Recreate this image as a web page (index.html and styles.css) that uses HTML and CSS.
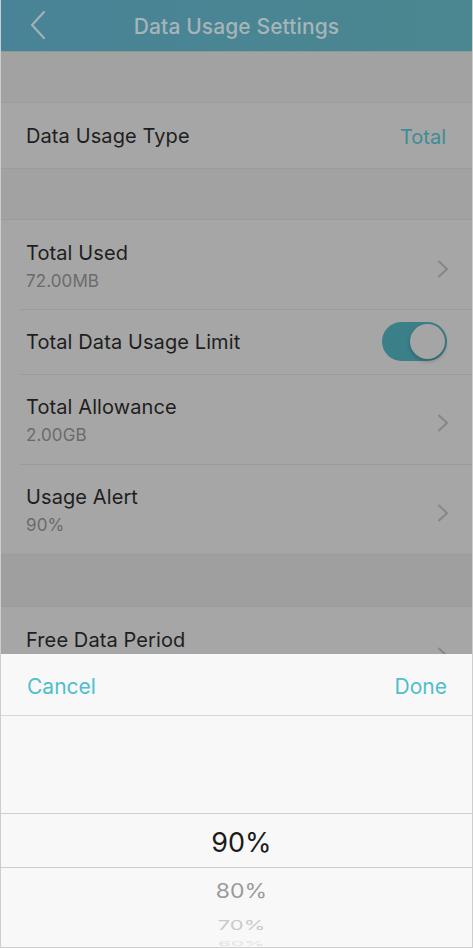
FILE: index.html
```html
<!DOCTYPE html>
<html lang="en">
<head>
<meta charset="utf-8">
<title>Data Usage Settings</title>
<link rel="stylesheet" href="styles.css">
</head>
<body>
<div class="frame">
  <header class="navbar">
    <svg class="back" width="18" height="30" viewBox="0 0 18 30"><path d="M15 2 L3 15 L15 28" fill="none" stroke="#a3b1b5" stroke-width="2.2" stroke-linecap="round" stroke-linejoin="round"/></svg>
    <h1 class="title">Data Usage Settings</h1>
  </header>

  <div class="gap"></div>
  <section class="group">
    <div class="row single">
      <span class="label">Data Usage Type</span>
      <span class="value">Total</span>
    </div>
  </section>

  <div class="gap"></div>
  <section class="group">
    <div class="row double">
      <div class="texts"><span class="label">Total Used</span><span class="sub">72.00MB</span></div>
      <svg class="chev" width="12" height="18" viewBox="0 0 12 18"><path d="M2 1.5 L10 9 L2 16.5" fill="none" stroke="#878787" stroke-width="2" stroke-linecap="round" stroke-linejoin="round"/></svg>
    </div>
    <div class="row single">
      <span class="label">Total Data Usage Limit</span>
      <span class="toggle"><span class="knob"></span></span>
    </div>
    <div class="row double">
      <div class="texts"><span class="label">Total Allowance</span><span class="sub">2.00GB</span></div>
      <svg class="chev" width="12" height="18" viewBox="0 0 12 18"><path d="M2 1.5 L10 9 L2 16.5" fill="none" stroke="#878787" stroke-width="2" stroke-linecap="round" stroke-linejoin="round"/></svg>
    </div>
    <div class="row double">
      <div class="texts"><span class="label">Usage Alert</span><span class="sub">90%</span></div>
      <svg class="chev" width="12" height="18" viewBox="0 0 12 18"><path d="M2 1.5 L10 9 L2 16.5" fill="none" stroke="#878787" stroke-width="2" stroke-linecap="round" stroke-linejoin="round"/></svg>
    </div>
  </section>

  <div class="gap dark"></div>
  <section class="group">
    <div class="row double">
      <div class="texts"><span class="label">Free Data Period</span><span class="sub-space"></span></div>
      <svg class="chev" width="12" height="18" viewBox="0 0 12 18"><path d="M2 1.5 L10 9 L2 16.5" fill="none" stroke="#878787" stroke-width="2" stroke-linecap="round" stroke-linejoin="round"/></svg>
    </div>
  </section>

  <div class="sheet">
    <div class="toolbar">
      <span class="action">Cancel</span>
      <span class="action">Done</span>
    </div>
    <div class="picker">
      <div class="spacer"></div>
      <div class="band"><span class="opt selected">90%</span></div>
      <div class="opt o1">80%</div>
      <div class="opt o2">70%</div>
      <div class="opt o3">60%</div>
    </div>
  </div>
</div>
</body>
</html>
```

FILE: styles.css
```css
* { box-sizing: border-box; }
html, body { margin: 0; padding: 0; }
body {
  font-family: Inter, "Open Sans", "Liberation Sans", sans-serif;
  background: #a3a3a3;
}
.frame {
  position: relative;
  width: 473px;
  height: 948px;
  overflow: hidden;
  border: 1px solid #cdcdcd;
  border-top: none;
  background: #a2a2a2;
}
.navbar {
  height: 52px;
  background: linear-gradient(90deg, #488397 0%, #4a878f 100%);
  display: flex;
  align-items: center;
  justify-content: center;
  position: relative;
  border-bottom: 1px solid #8a9a9e;
}
.back {
  position: absolute;
  left: 28px;
  top: 10px;
}
.title {
  margin: 1px 0 0;
  font-size: 21px;
  font-weight: 500;
  color: #a7b4b8;
  letter-spacing: 0.1px;
}
.gap {
  height: 50px;
  background: #a2a2a2;
}
.gap.dark { background: #9f9f9f; height: 51px; }
.group {
  background: #a6a6a6;
  border-top: 1px solid #9b9b9b;
  border-bottom: 1px solid #9b9b9b;
}
.row {
  display: flex;
  align-items: center;
  justify-content: space-between;
  padding: 2px 26px 0 25px;
  position: relative;
}
.row + .row::before {
  content: "";
  position: absolute;
  top: 0;
  left: 19px;
  right: 0;
  border-top: 1px solid #9b9b9b;
}
.row.single { height: 65px; }
.row.double { height: 90px; }
.group .row:first-child.double { height: 89px; }
.row.single .toggle { margin-top: -2px; }
.texts {
  display: flex;
  flex-direction: column;
  gap: 3px;
}
.label {
  font-size: 20px;
  line-height: 27px;
  color: #1e1e1e;
  letter-spacing: 0.1px;
}
.sub {
  font-size: 17px;
  line-height: 22px;
  color: #6b6b6b;
  letter-spacing: 0.1px;
}
.sub-space { height: 22px; }
.value {
  font-size: 20px;
  color: #3b8d97;
}
.chev { margin-right: -3px; margin-top: 6px; }
.toggle {
  width: 65px;
  height: 39px;
  border-radius: 20px;
  background: #3b8089;
  position: relative;
  margin-right: -1px;
}
.knob {
  position: absolute;
  right: 2px;
  top: 2px;
  width: 35px;
  height: 35px;
  border-radius: 50%;
  background: #a5a5a5;
  box-shadow: 0 2px 4px rgba(0,0,0,0.25);
}
.sheet {
  position: absolute;
  left: 0;
  right: 0;
  bottom: 0;
  height: 293px;
  background: #f8f8f8;
  display: flex;
  flex-direction: column;
}
.toolbar {
  height: 62px;
  border-bottom: 1px solid #d8d8d8;
  display: flex;
  align-items: center;
  justify-content: space-between;
  padding: 4px 25px 0 26px;
}
.action {
  font-size: 21px;
  color: #4fbfcd;
}
.picker {
  flex: 1;
  display: flex;
  flex-direction: column;
  align-items: center;
  overflow: hidden;
  padding-left: 10px;
}
.spacer { height: 97px; flex: none; }
.band {
  flex: none;
  width: calc(100% + 10px);
  margin-left: -10px;
  padding-left: 10px;
  height: 55px;
  border-top: 1px solid #cfcfcf;
  border-bottom: 1px solid #cfcfcf;
  display: flex;
  align-items: center;
  justify-content: center;
}
.opt { flex: none; text-align: center; }
.selected {
  font-size: 27px;
  color: #1b1b1b;
  margin-top: 4px;
}
.o1 {
  height: 42px;
  line-height: 46px;
  font-size: 23px;
  color: #9b9b9b;
  transform: scaleY(0.86);
}
.o2 {
  height: 32px;
  line-height: 36px;
  font-size: 22px;
  color: #c9c9c9;
  transform: scaleY(0.62);
  margin-top: -2px;
}
.o3 {
  height: 14px;
  line-height: 14px;
  font-size: 21px;
  color: #e2e2e2;
  transform: scaleY(0.3);
  margin-top: -3px;
}
```
